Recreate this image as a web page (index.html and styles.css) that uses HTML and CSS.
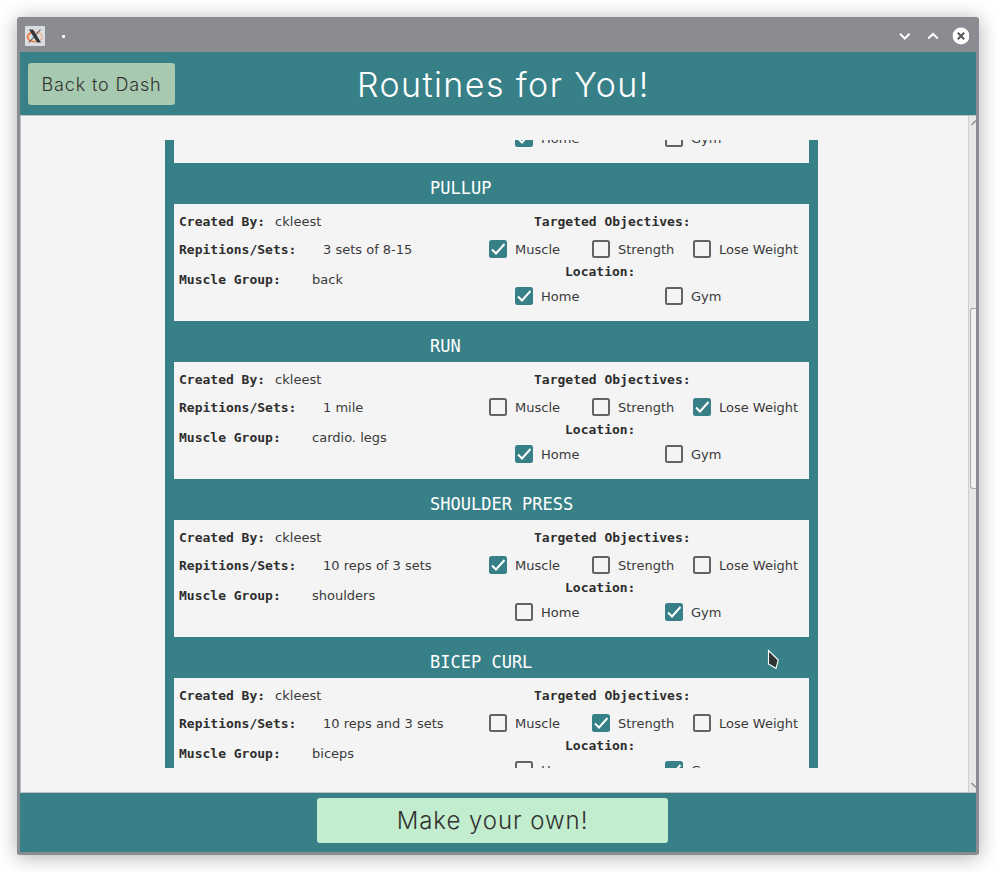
FILE: index.html
```html
<!DOCTYPE html>
<html lang="en">
<head>
<meta charset="utf-8">
<title>Routines for You!</title>
<link rel="stylesheet" href="styles.css">
</head>
<body>
<div class="window">
  <div class="titlebar">
    <svg class="app-icon" viewBox="0 0 20 20"><rect width="20" height="20" rx="1" fill="#d9dddf"/><ellipse cx="10" cy="11" rx="7.400" ry="4.700" fill="none" stroke="#f3b699" stroke-width="1.500"/><path d="M10 6.300c-4.500 0-7.400 2-7.400 4.700s3 4.700 7.400 4.700" fill="none" stroke="#ec7434" stroke-width="1.600"/><path d="M15.500 3.500L4 16.500" stroke="#555" stroke-width="1.100"/><path d="M4 3.500h4l8 13h-4z" fill="#33383a"/></svg>
    <span class="dot"></span>
    <svg class="controls" viewBox="0 0 72 18"><g fill="none" stroke="#fff" stroke-width="2"><path d="M3 6.800l4.800 4.700 4.800-4.700M31.200 11.500l4.800-4.700 4.800 4.700"/></g><circle cx="64" cy="9" r="8.400" fill="#fff"/><path d="M60.800 5.800l6.400 6.400M67.200 5.800l-6.400 6.400" stroke="#55565a" stroke-width="2"/></svg>
  </div>
  <div class="header">
    <button class="back"><span>Back to Dash</span></button>
    <h1>Routines for You!</h1>
  </div>
  <div class="content">
    <div class="page">
      <div class="list" id="list"></div>
    </div>
    <div class="scrollbar">
      <svg class="arrow" viewBox="0 0 7 12"><path d="M2.500 9L7 4.500" stroke="#85868a" stroke-width="1.300"/></svg>
      <div class="thumb"></div>
      <svg class="arrow" viewBox="0 0 7 12"><path d="M2.500 3L7 7.500" stroke="#85868a" stroke-width="1.300"/></svg>
    </div>
  </div>
  <div class="footer"><button class="make"><span>Make your own!</span></button></div>
</div>
<svg class="cursor" viewBox="0 0 14 24"><path d="M1.500 2.500v13.500l7.500 4.300 2.300-8.300z" fill="#303234" stroke="#fff" stroke-width="1.100"/></svg>
<script src="app.js"></script>
</body>
</html>
```
FILE: styles.css
```css
* { box-sizing: border-box; }
body {
  margin: 0;
  padding: 17px;
  height: 872px;
  overflow: hidden;
  background: #fff;
  font: 13px/18px "DejaVu Sans", sans-serif;
  color: #3a3a3a;
}
.window {
  width: 962px;
  height: 838px;
  display: flex;
  flex-direction: column;
  border: 3px solid #8b8c91;
  border-top-width: 0;
  border-radius: 3px;
  background: #8b8c91;
  box-shadow: 0 2px 20px rgba(0, 0, 0, .32);
}
.titlebar {
  height: 35px;
  flex: none;
  display: flex;
  align-items: center;
  padding: 3px 7px 0 5px;
}
.app-icon { width: 20px; height: 20px; }
.dot { width: 3px; height: 3px; margin-left: 17px; border-radius: 1px; background: #fff; }
.controls { width: 72px; height: 18px; margin-left: auto; }
.header {
  height: 63px;
  flex: none;
  display: flex;
  align-items: center;
  padding: 1px 8px 0;
  background: #388087;
}
button { border: 0; padding: 0; border-radius: 3px; color: #323232; }
.back { width: 147px; height: 42px; padding-top: 1px; background: #a6c9af; font: 300 18px/41px Inter, sans-serif; letter-spacing: .85px; }
h1 { margin: 2px 0 0 182px; color: #fff; font: 300 34px/42px Inter, sans-serif; letter-spacing: 1.4px; white-space: nowrap; }
.content { flex: 1; min-height: 0; display: flex; border: 1px solid #c0c1c1; border-right: 0; background: #f4f4f4; }
.page { flex: 1; padding: 24px 0 24px 144px; }
.list {
  width: 653px;
  height: 628px;
  overflow: hidden;
  padding: 0 9px;
  background: #388087;
}
.title { margin: 0; height: 41px; padding: 4px 0 0 256px; color: #fff; font: 17px/42px "DejaVu Sans Mono", monospace; }
.body { height: 117px; display: flex; background: #f4f4f4; }
.partial { height: 23px; overflow: hidden; }
.partial .row { margin-top: -11px; }
.facts { width: 315px; padding: 9px 0 0 5px; display: flex; flex-direction: column; }
.fact { height: 28px; display: flex; }
.fact:last-child { margin-top: 2px; }
b { font: bold 13px/18px "DejaVu Sans Mono", monospace; color: #2e2e2e; }
.creator { margin-left: 10px; }
.reps { margin-left: 26.6px; }
.muscle { margin-left: 31.3px; }
.targets { width: 320px; display: flex; flex-direction: column; padding-top: 9px; }
.targets .objectives-label { margin-left: 45px; height: 27px; }
.targets .location-label { margin: 5px 0 0 76px; height: 24px; }
.row { height: 18px; display: grid; }
.three { grid-template-columns: 103px 101px auto; }
.two { grid-template-columns: 150px auto; margin-left: 26px; }
.partial .two { margin-left: 341px; }
.check { height: 18px; display: flex; align-items: center; gap: 8px; white-space: nowrap; }
.check span { padding-top: 2px; }
.check i { width: 18px; height: 18px; flex: none; border: 2px solid #636363; border-radius: 2.5px; }
.check.on i { border: 0; background: #388087; }
.check svg { display: block; width: 18px; height: 18px; }
.scrollbar { width: 8px; flex: none; display: flex; flex-direction: column; border-left: 1px solid #cfcfcf; background: #e7e7e7; }
.arrow { width: 7px; height: 12px; }
.thumb { width: 6px; height: 181px; margin: 180px 0 auto 1px; border: 1px solid #a9a9a9; border-right: 0; border-radius: 3px 0 0 3px; background: #f1f1f1; }
.footer { height: 59px; flex: none; padding: 5px 0 0 297px; background: #388087; }
.make { display: block; width: 351px; height: 45px; padding-top: 1px; background: #c2edce; font: 300 24px/44px Inter, sans-serif; letter-spacing: .95px; }
.cursor { position: absolute; left: 767px; top: 648px; width: 14px; height: 24px; }
```
FILE: app.js
```js
const routines = [
  { name: "PULLUP", reps: "3 sets of 8-15", group: "back", on: ["Muscle", "Home"] },
  { name: "RUN", reps: "1 mile", group: "cardio. legs", on: ["Lose Weight", "Home"] },
  { name: "SHOULDER PRESS", reps: "10 reps of 3 sets", group: "shoulders", on: ["Muscle", "Gym"] },
  { name: "BICEP CURL", reps: "10 reps and 3 sets", group: "biceps", on: ["Strength", "Gym"] }
];
const tick = '<svg viewBox="0 0 18 18"><path d="M3 9.500l4 4L15.500 4" fill="none" stroke="#fff" stroke-width="1.900"/></svg>';
const check = (label, on) =>
  `<span class="check ${on.includes(label) ? "on" : ""}"><i>${on.includes(label) ? tick : ""}</i><span>${label}</span></span>`;
const places = on => `<div class="row two">${check("Home", on)}${check("Gym", on)}</div>`;
const card = r => `
  <h2 class="title">${r.name}</h2>
  <div class="body">
    <div class="facts">
      <div class="fact"><b>Created By:</b><span class="creator">ckleest</span></div>
      <div class="fact"><b>Repitions/Sets:</b><span class="reps">${r.reps}</span></div>
      <div class="fact"><b>Muscle Group:</b><span class="muscle">${r.group}</span></div>
    </div>
    <div class="targets">
      <b class="objectives-label">Targeted Objectives:</b>
      <div class="row three">${check("Muscle", r.on)}${check("Strength", r.on)}${check("Lose Weight", r.on)}</div>
      <b class="location-label">Location:</b>
      ${places(r.on)}
    </div>
  </div>`;
document.getElementById("list").innerHTML =
  `<div class="body partial">${places(["Home"])}</div>` + routines.map(card).join("");
```
